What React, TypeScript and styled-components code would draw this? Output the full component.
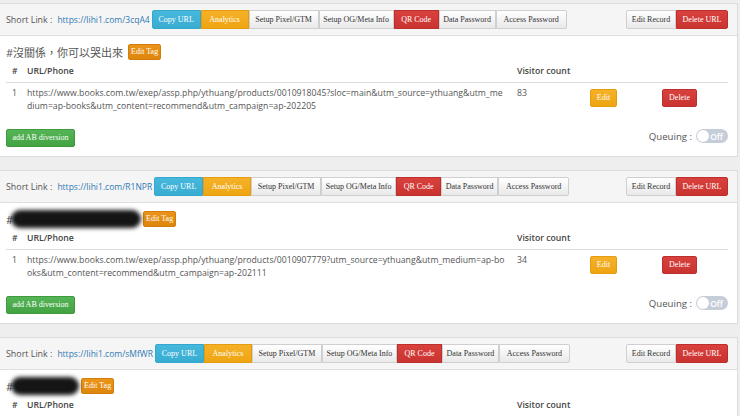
import React from 'react'
import styled, { createGlobalStyle } from 'styled-components'

type Variant = 'info' | 'warning' | 'default' | 'danger' | 'success' | 'tag'

const palette: Record<Variant, { top: string; bottom: string; border: string; color: string }> = {
  info: { top: '#46b8dc', bottom: '#39acd2', border: '#35a6cc', color: '#fff' },
  warning: { top: '#f5b128', bottom: '#eea512', border: '#e39d0e', color: '#fff' },
  default: { top: '#ffffff', bottom: '#e9e9e9', border: '#cfcfcf', color: '#333' },
  danger: { top: '#d9413d', bottom: '#c93330', border: '#bd2f2c', color: '#fff' },
  success: { top: '#55b455', bottom: '#43a343', border: '#3d9a3d', color: '#fff' },
  tag: { top: '#eb9419', bottom: '#de860c', border: '#d17d0a', color: '#fff' },
}

const GlobalStyle = createGlobalStyle`
  html, body {
    margin: 0;
    padding: 0;
    background: #eeeeee;
    font-family: "Open Sans", "Noto Sans CJK TC", sans-serif;
    overflow: hidden;
  }
`

const Page = styled.div`
  display: flex;
  flex-direction: column;
  gap: 13px;
  padding: 3px 2px 0 0;
  height: 413px;
  overflow: hidden;
`

const Panel = styled.section`
  flex-shrink: 0;
  background: #fff;
  border: 1px solid #dcdcdc;
  border-left: none;
`

const Heading = styled.div`
  display: flex;
  align-items: center;
  height: 31px;
  padding: 0 9px 0 6px;
  background: #f5f5f5;
  border-bottom: 1px solid #dedede;
`

const Label = styled.span`
  font-size: 8.9px;
  color: #555;
  margin-right: 5px;
`

const ShortUrl = styled.a`
  font-size: 8.5px;
  color: #2f7ab4;
  text-decoration: none;
  margin-right: 2px;
`

const BtnGroup = styled.div<{ $push?: boolean }>`
  display: flex;
  margin-left: ${(p) => (p.$push ? 'auto' : '0')};
`

const Btn = styled.button<{ $variant: Variant; $h?: number; $w?: number }>`
  height: ${(p) => p.$h ?? 19}px;
  width: ${(p) => (p.$w ? `${p.$w}px` : 'auto')};
  padding: 0 ${(p) => (p.$w ? 0 : 7)}px;
  border: 1px solid ${(p) => palette[p.$variant].border};
  border-radius: 2px;
  background: linear-gradient(${(p) => palette[p.$variant].top}, ${(p) => palette[p.$variant].bottom});
  color: ${(p) => palette[p.$variant].color};
  font-family: "Liberation Serif", serif;
  font-size: 8px;
  line-height: 1;
  white-space: nowrap;
  cursor: pointer;

  ${BtnGroup} > & {
    border-radius: 0;
  }
  ${BtnGroup} > &:first-child {
    border-radius: 2px 0 0 2px;
  }
  ${BtnGroup} > &:last-child {
    border-radius: 0 2px 2px 0;
  }
`

const Body = styled.div`
  display: flex;
  flex-direction: column;
  padding: 8px 9px 9px 6px;
  height: 103px;
`

const TagRow = styled.div`
  display: flex;
  align-items: center;
  height: 16px;
  font-size: 11px;
  color: #555;
`

const TagText = styled.span`
  margin-right: 5px;
`

const Redaction = styled.span<{ $w: number }>`
  display: inline-block;
  width: ${(p) => p.$w}px;
  height: 18px;
  margin: 0 2px 0 -2px;
  border-radius: 9px;
  background: #151515;
  filter: blur(2.2px);
`

const Table = styled.div`
  display: grid;
  grid-template-columns: 21px 490px 68px 72px 1fr;
`

const HeadCell = styled.div`
  height: 22px;
  display: flex;
  align-items: center;
  font-size: 8.7px;
  font-weight: 600;
  color: #444;
  border-bottom: 1px solid #dddddd;

  &:first-child {
    padding-left: 6px;
  }
`

const Cell = styled.div<{ $hl?: boolean; $pad?: number }>`
  height: 30px;
  padding-top: 4px;
  padding-left: ${(p) => p.$pad ?? 0}px;
  box-sizing: border-box;
  font-size: 8.7px;
  line-height: 13px;
  color: #555;
  background: ${(p) => (p.$hl ? '#e4f1fa' : 'transparent')};
`

const UrlLine = styled.div`
  white-space: nowrap;
`

const ActionCell = styled(Cell)`
  padding-top: 6px;
`

const Footer = styled.div`
  display: flex;
  justify-content: space-between;
  align-items: flex-start;
  margin-top: 16px;
`

const Queue = styled.div`
  display: flex;
  align-items: center;
  gap: 4px;
  font-size: 9.6px;
  color: #555;
  height: 14px;
`

const Toggle = styled.span`
  position: relative;
  display: inline-flex;
  align-items: center;
  justify-content: flex-end;
  width: 32px;
  height: 14px;
  padding-right: 5px;
  box-sizing: border-box;
  border-radius: 7px;
  background: #c5cdd9;
  color: #fff;
  font-size: 8.5px;
  font-weight: 600;

  &::before {
    content: '';
    position: absolute;
    left: 1px;
    top: 1px;
    width: 12px;
    height: 12px;
    border-radius: 50%;
    background: #fff;
  }
`

type UrlRecord = {
  short: string
  tag?: string
  redact?: number
  lines: string[]
  count: number
  hl?: boolean
}

const records: UrlRecord[] = [
  {
    short: 'https://lihi1.com/3cqA4',
    tag: '#沒關係，你可以哭出來',
    lines: [
      'https://www.books.com.tw/exep/assp.php/ythuang/products/0010918045?sloc=main&utm_source=ythuang&utm_me',
      'dium=ap-books&utm_content=recommend&utm_campaign=ap-202205',
    ],
    count: 83,
  },
  {
    short: 'https://lihi1.com/R1NPR',
    redact: 130,
    lines: [
      'https://www.books.com.tw/exep/assp.php/ythuang/products/0010907779?utm_source=ythuang&utm_medium=ap-bo',
      'oks&utm_content=recommend&utm_campaign=ap-202111',
    ],
    count: 34,
  },
  {
    short: 'https://lihi1.com/sMfWR',
    redact: 68,
    lines: ['https://www.books.com.tw/exep/assp.php/ythuang/products/0010907779', ''],
    count: 0,
    hl: true,
  },
]

const tools: { label: string; variant: Variant; w: number }[] = [
  { label: 'Copy URL', variant: 'info', w: 49 },
  { label: 'Analytics', variant: 'warning', w: 48 },
  { label: 'Setup Pixel/GTM', variant: 'default', w: 70 },
  { label: 'Setup OG/Meta Info', variant: 'default', w: 75 },
  { label: 'QR Code', variant: 'danger', w: 45 },
  { label: 'Data Password', variant: 'default', w: 57 },
  { label: 'Access Password', variant: 'default', w: 71 },
]

const UrlPanel = ({ rec }: { rec: UrlRecord }) => (
  <Panel>
    <Heading>
      <Label>Short Link :</Label>
      <ShortUrl href="#">{rec.short}</ShortUrl>
      <BtnGroup>
        {tools.map((t) => (
          <Btn key={t.label} $variant={t.variant} $w={t.w}>
            {t.label}
          </Btn>
        ))}
      </BtnGroup>
      <BtnGroup $push>
        <Btn $variant="default" $w={50}>Edit Record</Btn>
        <Btn $variant="danger" $w={52}>Delete URL</Btn>
      </BtnGroup>
    </Heading>
    <Body>
      <TagRow>
        {rec.tag ? (
          <TagText>{rec.tag}</TagText>
        ) : (
          <>
            #<Redaction $w={rec.redact ?? 60} />
          </>
        )}
        <Btn $variant="tag" $h={16} $w={33}>Edit Tag</Btn>
      </TagRow>
      <Table>
        <HeadCell>#</HeadCell>
        <HeadCell>URL/Phone</HeadCell>
        <HeadCell>Visitor count</HeadCell>
        <HeadCell />
        <HeadCell />
        <Cell $pad={6} $hl={rec.hl}>1</Cell>
        <Cell $hl={rec.hl}>
          {rec.lines.map((l, i) => (
            <UrlLine key={i}>{l}</UrlLine>
          ))}
        </Cell>
        <Cell $hl={rec.hl}>{rec.count}</Cell>
        <ActionCell $pad={5} $hl={rec.hl}>
          <Btn $variant="warning" $h={18} $w={27}>Edit</Btn>
        </ActionCell>
        <ActionCell $pad={5} $hl={rec.hl}>
          <Btn $variant="danger" $h={18} $w={35}>Delete</Btn>
        </ActionCell>
      </Table>
      <Footer>
        <Btn $variant="success" $h={18} $w={69}>add AB diversion</Btn>
        <Queue>
          Queuing :<Toggle>Off</Toggle>
        </Queue>
      </Footer>
    </Body>
  </Panel>
)

export default function App() {
  return (
    <>
      <GlobalStyle />
      <Page>
        {records.map((r) => (
          <UrlPanel key={r.short} rec={r} />
        ))}
      </Page>
    </>
  )
}
